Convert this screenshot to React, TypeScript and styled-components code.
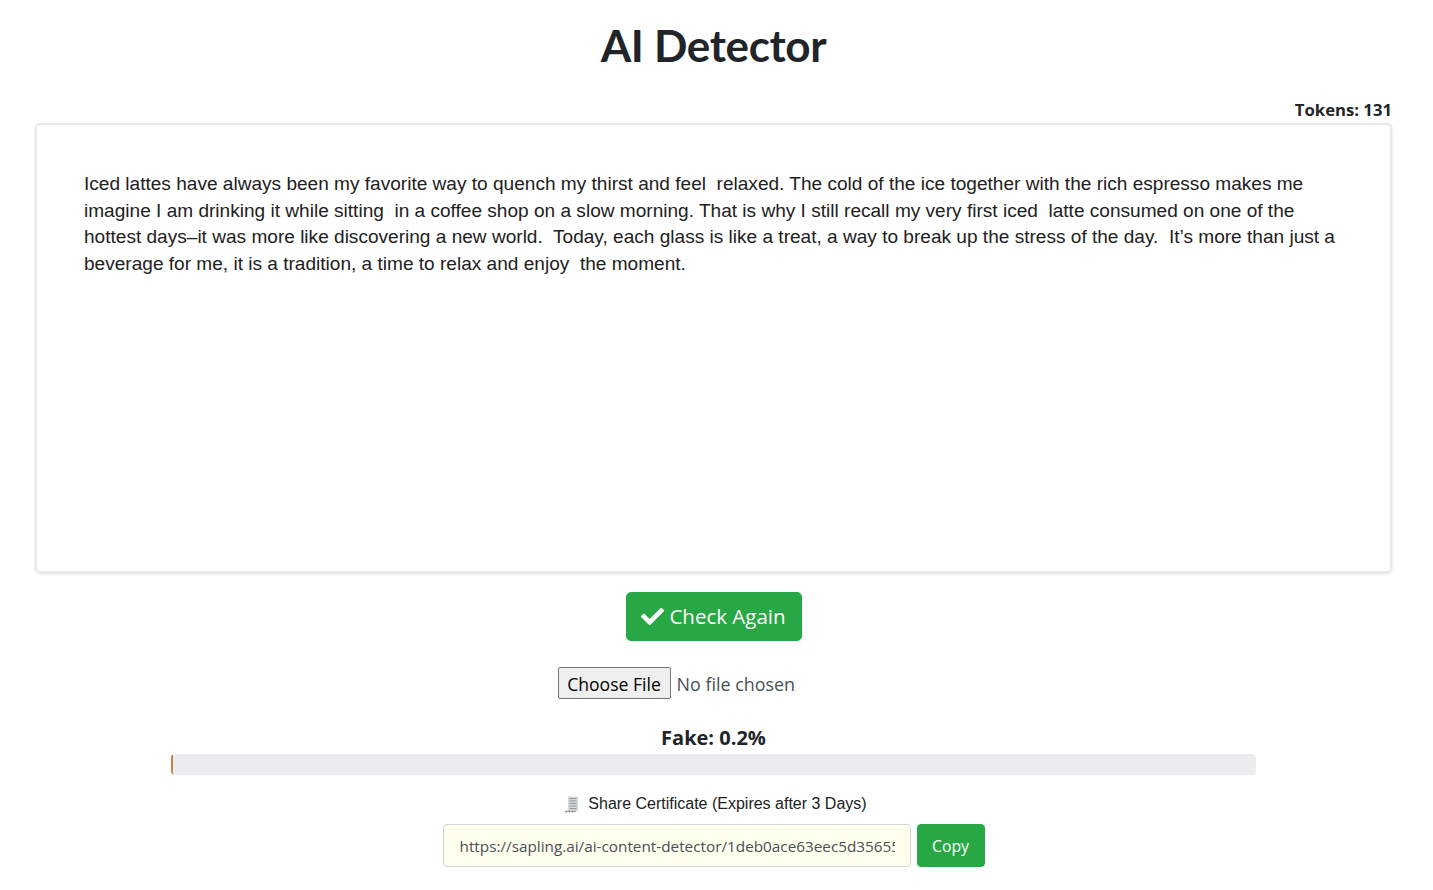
import React from "react"
import styled, { createGlobalStyle } from "styled-components"
import { FaCheck } from "react-icons/fa"

const GlobalStyle = createGlobalStyle`
	html, body {
		margin: 0;
		padding: 0;
		background: #fff;
		color: #212529;
		font-family: "Open Sans", "Noto Sans", sans-serif;
	}
`

const Page = styled.div`
	width: 1433px;
	height: 890px;
	overflow: hidden;
	display: flex;
	flex-direction: column;
	align-items: center;
	padding: 0 41px 0 35px;
	box-sizing: border-box;
`

const Title = styled.h1`
	margin: 18px 0 0;
	height: 54px;
	font-family: "Lato", sans-serif;
	font-size: 44px;
	line-height: 54px;
	letter-spacing: -0.35px;
	font-weight: 700;
	color: #212529;
`

const Tokens = styled.div`
	align-self: flex-end;
	margin-top: 25px;
	height: 26px;
	font-size: 16.7px;
	line-height: 25px;
	font-weight: 700;
	color: #212529;
`

const Editor = styled.div`
	width: 100%;
	height: 450px;
	box-sizing: border-box;
	padding: 46px 47px;
	border: 2px solid #e9e9e9;
	border-radius: 5px;
	box-shadow: 0 1px 3px rgba(0, 0, 0, 0.12);
	font-family: "Liberation Sans", Arial, sans-serif;
	font-size: 19.07px;
	line-height: 26.5px;
	color: #212121;
	white-space: pre-wrap;
`

const CheckButton = styled.button`
	display: flex;
	align-items: center;
	justify-content: center;
	gap: 5px;
	margin-top: 19px;
	width: 176px;
	height: 49px;
	padding: 0;
	border: 1px solid #28a745;
	border-radius: 4.8px;
	background: #28a745;
	color: #fff;
	font-family: "Open Sans", sans-serif;
	font-size: 20.5px;
	line-height: 1.5;
`

const FileRow = styled.div`
	display: flex;
	align-items: center;
	width: 312px;
	margin-top: 26px;
	height: 32px;
	white-space: nowrap;
`

const FileButton = styled.button`
	width: 113px;
	height: 32px;
	padding: 1px 0 0;
	margin-right: 6px;
	border: 1px solid #767676;
	border-radius: 2px;
	background: #efefef;
	color: #000;
	font-family: "Open Sans", sans-serif;
	font-size: 17.6px;
`

const FileName = styled.span`
	padding-top: 2px;
	font-size: 17.9px;
	color: #495057;
`

const FakeLabel = styled.div`
	margin-top: 25px;
	height: 27px;
	font-size: 20px;
	line-height: 28px;
	font-weight: 700;
	color: #212529;
`

const Track = styled.div`
	width: 1085px;
	height: 21px;
	margin-top: 3px;
	border-radius: 4px;
	background: #eaecee;
	overflow: hidden;
`

const Fill = styled.div`
	height: 100%;
	background: #c9853d;
`

const ShareLine = styled.div`
	display: flex;
	align-items: center;
	gap: 9px;
	margin: 18px 0 0 5px;
	height: 22px;
	font-family: "Liberation Sans", Arial, sans-serif;
	font-size: 16px;
	color: #212121;
`

const ShareRow = styled.div`
	display: flex;
	gap: 6px;
	margin-top: 9px;
`

const LinkInput = styled.input`
	width: 468px;
	height: 43px;
	box-sizing: border-box;
	padding: 6px 15px 6px 16px;
	border: 1px solid #ced4da;
	border-radius: 4px;
	background: #ffffee;
	color: #495057;
	font-family: "Open Sans", sans-serif;
	font-size: 15.3px;
`

const CopyButton = styled.button`
	width: 68px;
	height: 43px;
	padding: 0;
	border: 1px solid #28a745;
	border-radius: 4px;
	background: #28a745;
	color: #fff;
	font-family: "Open Sans", sans-serif;
	font-size: 15.8px;
`

const ReceiptIcon = () => (
	<svg width="14" height="17" viewBox="0 0 14 17">
		<rect x="3" y="0.5" width="10" height="15" fill="#d6d9db" />
		<path d="M4.5 2.5h7M4.5 5h7M4.5 7.5h7M4.5 10h7M4.5 12.5h7" stroke="#92969a" strokeWidth="1" />
		<path d="M0.5 15.5h10" stroke="#6b6e70" strokeWidth="1.4" strokeDasharray="2 1" />
	</svg>
)

const essay =
	"Iced lattes have always been my favorite way to quench my thirst and feel  relaxed. The cold of the ice together with the rich espresso makes me imagine I am drinking it while sitting  in a coffee shop on a slow morning. That is why I still recall my very first iced  latte consumed on one of the hottest days\u2013it was more like discovering a new world.  Today, each glass is like a treat, a way to break up the stress of the day.  It\u2019s more than just a beverage for me, it is a tradition, a time to relax and enjoy  the moment."

export default function App() {
	const fake = 0.2

	return (
		<>
			<GlobalStyle />
			<Page>
				<Title>AI Detector</Title>
				<Tokens>Tokens: 131</Tokens>
				<Editor>{essay}</Editor>
				<CheckButton>
					<FaCheck size={23} />
					Check Again
				</CheckButton>
				<FileRow>
					<FileButton>Choose File</FileButton>
					<FileName>No file chosen</FileName>
				</FileRow>
				<FakeLabel>Fake: {fake}%</FakeLabel>
				<Track>
					<Fill style={{ width: `${fake}%` }} />
				</Track>
				<ShareLine>
					<ReceiptIcon />
					Share Certificate (Expires after 3 Days)
				</ShareLine>
				<ShareRow>
					<LinkInput readOnly value="https://sapling.ai/ai-content-detector/1deb0ace63eec5d35655a1f0" />
					<CopyButton>Copy</CopyButton>
				</ShareRow>
			</Page>
		</>
	)
}
